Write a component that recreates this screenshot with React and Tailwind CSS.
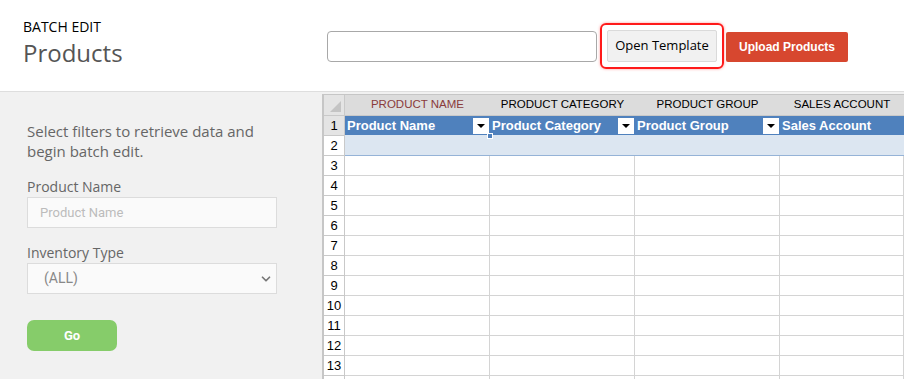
import { ChevronDown } from "lucide-react";

const COLUMNS = [
  { head: "PRODUCT NAME", title: "Product Name", active: true },
  { head: "PRODUCT CATEGORY", title: "Product Category" },
  { head: "PRODUCT GROUP", title: "Product Group" },
  { head: "SALES ACCOUNT", title: "Sales Account" },
];

const ROWS = [3, 4, 5, 6, 7, 8, 9, 10, 11, 12, 13, 14];

function FilterButton() {
  return (
    <span className="flex h-[16px] w-[16px] shrink-0 items-center justify-center bg-white">
      <span className="h-0 w-0 border-x-[4px] border-t-[4px] border-x-transparent border-t-black" />
    </span>
  );
}

function Sheet() {
  return (
    <div className="relative h-full overflow-hidden border-l-2 border-t border-[#c6c6c6] bg-white font-['Liberation_Sans',Arial,sans-serif] text-[12px] text-black">
      <div className="grid grid-cols-[21px_145px_145px_145px_1fr]">
        <div className="relative h-[21px] border-b border-r border-[#c9c9c9] bg-[#e4e4e4]">
          <span className="absolute bottom-[3px] right-[3px] h-0 w-0 border-b-[11px] border-l-[11px] border-b-[#c4c4c4] border-l-transparent" />
        </div>
        {COLUMNS.map((c) => (
          <div
            key={c.head}
            className={`flex h-[21px] items-center justify-center whitespace-nowrap border-b border-[#c9c9c9] bg-[#dcdcdc] text-[11.5px] ${c.active ? "text-[#8a3b3b]" : "text-black"}`}
          >
            {c.head}
          </div>
        ))}

        <div className="flex h-[20px] items-center justify-center border-b border-r border-[#c9c9c9] bg-[#e4e4e4] text-[13px]">1</div>
        {COLUMNS.map((c, i) => (
          <div key={c.title} className="relative flex h-[20px] items-center justify-between border-b border-[#dce6f1] bg-[#4f81bd] pl-[2px] pr-[1px]">
            <span className="whitespace-nowrap text-[13px] font-bold text-white">{c.title}</span>
            {i < 3 ? <FilterButton /> : null}
            {i === 0 ? (
              <span className="absolute bottom-[-4px] right-[-3px] z-10 h-[6px] w-[6px] border border-white bg-[#4f81bd]" />
            ) : null}
          </div>
        ))}

        <div className="flex h-[20px] items-center justify-center border-b border-r border-[#c9c9c9] bg-white text-[13px]">2</div>
        {COLUMNS.map((c) => (
          <div key={c.title + "2"} className="h-[20px] border-b border-[#95b3d7] bg-[#dce6f1]" />
        ))}

        {ROWS.map((r) => (
          <div key={r} className="contents">
            <div className="flex h-[20px] items-center justify-center border-b border-r border-[#c9c9c9] bg-white text-[13px]">
              {r < 14 ? r : ""}
            </div>
            {COLUMNS.map((c) => (
              <div key={c.title + r} className="h-[20px] border-b border-r border-[#d4d4d4] bg-white" />
            ))}
          </div>
        ))}
      </div>
    </div>
  );
}

export default function App() {
  return (
    <div className="h-[379px] w-[904px] overflow-hidden bg-white font-['Open_Sans',sans-serif]">
      <header className="flex h-[92px] border-b border-[#dedede]">
        <div className="w-[327px] shrink-0 pl-[23px] pt-[18px]">
          <div className="text-[14px] leading-[18px] text-black">BATCH EDIT</div>
          <div className="mt-[2px] text-[24px] leading-[30px] text-[#555]">Products</div>
        </div>
        <div className="flex items-start pt-[31px]">
          <input className="h-[31px] w-[270px] rounded-[4px] border border-[#a8a8a8] bg-white px-2 text-[13px] outline-none" />
          <div className="ml-[3px] mt-[-8px] rounded-[6px] border-2 border-[#ff1a1a] p-[5px] shadow-[0_0_3px_rgba(255,0,0,0.4)]">
            <button className="h-[32px] w-[110px] rounded-[2px] border border-[#dadada] bg-[#f1f1f1] text-[13px] text-black">
              Open Template
            </button>
          </div>
          <button className="ml-[2px] mt-[1px] h-[30px] w-[122px] rounded-[2px] bg-[#d7472f] font-['Liberation_Sans',Arial,sans-serif] text-[12px] font-bold text-white">
            Upload Products
          </button>
        </div>
      </header>

      <div className="flex h-[287px]">
        <aside className="w-[322px] shrink-0 bg-[#f1f1f1] pl-[27px] pt-[29px]">
          <p className="w-[250px] text-[15px] leading-[20px] text-[#666]">
            Select filters to retrieve data and begin batch edit.
          </p>
          <div className="mt-[16px] text-[14px] leading-[20px] text-[#666]">Product Name</div>
          <input
            placeholder="Product Name"
            className="h-[31px] w-[250px] border border-[#dcdcdc] bg-[#fafafa] px-[12px] font-['Roboto',sans-serif] text-[13px] outline-none placeholder:text-[#bcbcbc]"
          />
          <div className="mt-[15px] text-[14px] leading-[20px] text-[#666]">Inventory Type</div>
          <div className="flex h-[31px] w-[250px] items-center justify-between border border-[#dcdcdc] bg-[#fafafa] pl-[16px] pr-[3px] font-['Roboto',sans-serif] text-[14px] text-[#888]">
            <span>(ALL)</span>
            <ChevronDown size={14} strokeWidth={3} className="text-[#777]" />
          </div>
          <button className="mt-[26px] h-[31px] w-[90px] rounded-[7px] bg-[#86cc6a] font-['Roboto',sans-serif] text-[13px] font-bold text-white">
            Go
          </button>
        </aside>
        <div className="flex-1 bg-[#f1f1f1] pt-[2px]">
          <Sheet />
        </div>
      </div>
    </div>
  );
}
